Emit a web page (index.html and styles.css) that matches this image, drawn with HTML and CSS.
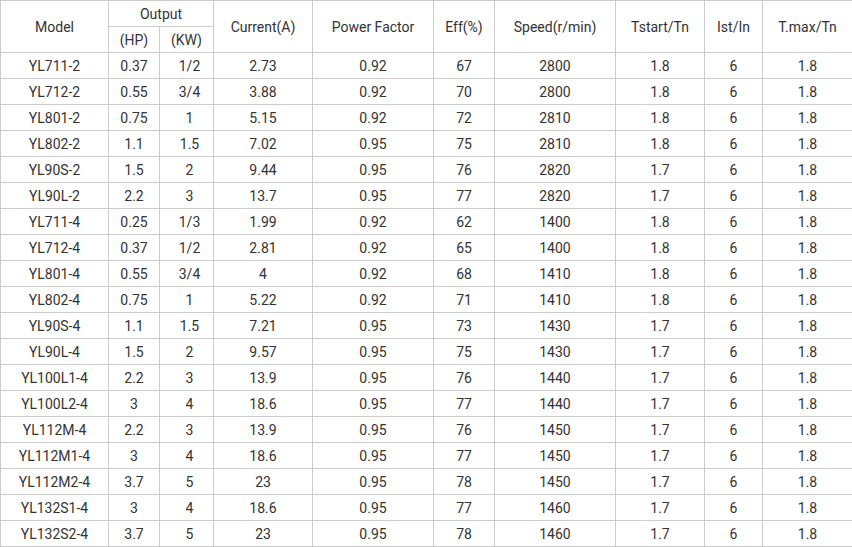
FILE: index.html
```html
<!DOCTYPE html>
<html>
<head>
<meta charset="utf-8">
<link rel="stylesheet" href="styles.css">
</head>
<body>
<table class="spec">
<colgroup>
<col class="c-model"><col class="c-hp"><col class="c-kw"><col class="c-cur"><col class="c-pf"><col class="c-eff"><col class="c-speed"><col class="c-ts"><col class="c-ist"><col class="c-tmax">
</colgroup>
<thead>
<tr><th rowspan="2">Model</th><th colspan="2">Output</th><th rowspan="2">Current(A)</th><th rowspan="2">Power Factor</th><th rowspan="2">Eff(%)</th><th rowspan="2">Speed(r/min)</th><th rowspan="2">Tstart/Tn</th><th rowspan="2">Ist/In</th><th rowspan="2">T.max/Tn</th></tr>
<tr><th>(HP)</th><th>(KW)</th></tr>
</thead>
<tbody>
<tr><td>YL711-2</td><td>0.37</td><td class="kw">1/2</td><td>2.73</td><td>0.92</td><td>67</td><td>2800</td><td>1.8</td><td>6</td><td>1.8</td></tr>
<tr><td>YL712-2</td><td>0.55</td><td class="kw">3/4</td><td>3.88</td><td>0.92</td><td>70</td><td>2800</td><td>1.8</td><td>6</td><td>1.8</td></tr>
<tr><td>YL801-2</td><td>0.75</td><td class="kw">1</td><td>5.15</td><td>0.92</td><td>72</td><td>2810</td><td>1.8</td><td>6</td><td>1.8</td></tr>
<tr><td>YL802-2</td><td>1.1</td><td class="kw">1.5</td><td>7.02</td><td>0.95</td><td>75</td><td>2810</td><td>1.8</td><td>6</td><td>1.8</td></tr>
<tr><td>YL90S-2</td><td>1.5</td><td class="kw">2</td><td>9.44</td><td>0.95</td><td>76</td><td>2820</td><td>1.7</td><td>6</td><td>1.8</td></tr>
<tr><td>YL90L-2</td><td>2.2</td><td class="kw">3</td><td>13.7</td><td>0.95</td><td>77</td><td>2820</td><td>1.7</td><td>6</td><td>1.8</td></tr>
<tr><td>YL711-4</td><td>0.25</td><td class="kw">1/3</td><td>1.99</td><td>0.92</td><td>62</td><td>1400</td><td>1.8</td><td>6</td><td>1.8</td></tr>
<tr><td>YL712-4</td><td>0.37</td><td class="kw">1/2</td><td>2.81</td><td>0.92</td><td>65</td><td>1400</td><td>1.8</td><td>6</td><td>1.8</td></tr>
<tr><td>YL801-4</td><td>0.55</td><td class="kw">3/4</td><td>4</td><td>0.92</td><td>68</td><td>1410</td><td>1.8</td><td>6</td><td>1.8</td></tr>
<tr><td>YL802-4</td><td>0.75</td><td class="kw">1</td><td>5.22</td><td>0.92</td><td>71</td><td>1410</td><td>1.8</td><td>6</td><td>1.8</td></tr>
<tr><td>YL90S-4</td><td>1.1</td><td class="kw">1.5</td><td>7.21</td><td>0.95</td><td>73</td><td>1430</td><td>1.7</td><td>6</td><td>1.8</td></tr>
<tr><td>YL90L-4</td><td>1.5</td><td class="kw">2</td><td>9.57</td><td>0.95</td><td>75</td><td>1430</td><td>1.7</td><td>6</td><td>1.8</td></tr>
<tr><td>YL100L1-4</td><td>2.2</td><td class="kw">3</td><td>13.9</td><td>0.95</td><td>76</td><td>1440</td><td>1.7</td><td>6</td><td>1.8</td></tr>
<tr><td>YL100L2-4</td><td>3</td><td class="kw">4</td><td>18.6</td><td>0.95</td><td>77</td><td>1440</td><td>1.7</td><td>6</td><td>1.8</td></tr>
<tr><td>YL112M-4</td><td>2.2</td><td class="kw">3</td><td>13.9</td><td>0.95</td><td>76</td><td>1450</td><td>1.7</td><td>6</td><td>1.8</td></tr>
<tr><td>YL112M1-4</td><td>3</td><td class="kw">4</td><td>18.6</td><td>0.95</td><td>77</td><td>1450</td><td>1.7</td><td>6</td><td>1.8</td></tr>
<tr><td>YL112M2-4</td><td>3.7</td><td class="kw">5</td><td>23</td><td>0.95</td><td>78</td><td>1450</td><td>1.7</td><td>6</td><td>1.8</td></tr>
<tr><td>YL132S1-4</td><td>3</td><td class="kw">4</td><td>18.6</td><td>0.95</td><td>77</td><td>1460</td><td>1.7</td><td>6</td><td>1.8</td></tr>
<tr><td>YL132S2-4</td><td>3.7</td><td class="kw">5</td><td>23</td><td>0.95</td><td>78</td><td>1460</td><td>1.7</td><td>6</td><td>1.8</td></tr>
</tbody>
</table>
</body>
</html>
```
FILE: styles.css
```css
html, body {
  margin: 0;
  padding: 0;
  background: #fff;
}
.spec {
  border-collapse: collapse;
  table-layout: fixed;
  width: 852px;
  font-family: Roboto, "Liberation Sans", sans-serif;
  font-size: 14px;
  color: #333;
}
.spec th, .spec td {
  border: 1px solid #ccc;
  height: 25px;
  padding: 0;
  text-align: center;
  vertical-align: middle;
  font-weight: normal;
  line-height: 16px;
  white-space: nowrap;
}
.spec td.kw {
  padding-left: 6px;
}
.c-model { width: 108px; }
.c-hp { width: 51px; }
.c-kw { width: 54px; }
.c-cur { width: 99px; }
.c-pf { width: 121px; }
.c-eff { width: 61px; }
.c-speed { width: 121px; }
.c-ts { width: 89px; }
.c-ist { width: 58px; }
.c-tmax { width: 90px; }
```
